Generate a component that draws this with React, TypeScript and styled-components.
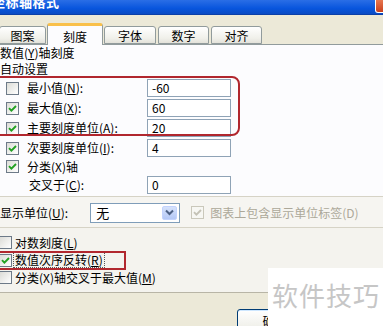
import styled, { createGlobalStyle } from 'styled-components';

const GlobalStyle = createGlobalStyle`
  html, body {
    margin: 0;
    padding: 0;
    background: #ece9d8;
  }
  body {
    font-family: 'Noto Sans CJK SC', 'Liberation Sans', sans-serif;
    font-size: 12px;
    color: #000;
  }
`;

interface CheckProps {
  checked?: boolean;
  disabled?: boolean;
}

const Check = ({ checked, disabled }: CheckProps) => (
  <CheckBox disabled={disabled}>
    {checked && (
      <svg width='9' height='9' viewBox='0 0 9 9'>
        <path d='M1 4.2 L3.4 6.6 L8 2' fill='none' stroke={disabled ? '#c4c2b6' : '#21a121'} strokeWidth='1.9' />
      </svg>
    )}
  </CheckBox>
);

const tabs = [
  { name: '图案', w: 47, gap: 1 },
  { name: '刻度', w: 56, gap: 1, active: true },
  { name: '字体', w: 52, gap: 2 },
  { name: '数字', w: 51, gap: 2 },
  { name: '对齐', w: 51, gap: 0 },
];

const App = () => {
  return (
    <Window>
      <GlobalStyle />
      <TitleBar>
        <Title>坐标轴格式</Title>
        <CloseBtn />
      </TitleBar>

      <TabStrip>
        {tabs.map((t) => (
          <Tab key={t.name} w={t.w} gap={t.gap} active={t.active}>
            {t.name}
          </Tab>
        ))}
      </TabStrip>

      <Group>
        <Heading>
          数值(<u>Y</u>)轴刻度
        </Heading>
        <Heading>自动设置</Heading>
        <Spacer />
        <Row>
          <Check />
          <Label>
            最小值(<u>N</u>):
          </Label>
          <Input>-60</Input>
        </Row>
        <Row>
          <Check checked />
          <Label>
            最大值(<u>X</u>):
          </Label>
          <Input>60</Input>
        </Row>
        <Row>
          <Check checked />
          <Label>
            主要刻度单位(<u>A</u>):
          </Label>
          <Input>20</Input>
        </Row>
        <Row>
          <Check checked />
          <Label>
            次要刻度单位(<u>I</u>):
          </Label>
          <Input>4</Input>
        </Row>
        <Row short>
          <Check checked />
          <Label>分类(X)轴</Label>
        </Row>
        <Row>
          <Label indent>
            交叉于(<u>C</u>):
          </Label>
          <Input>0</Input>
        </Row>
        <RedFrame />
      </Group>

      <UnitRow>
        <span>
          显示单位(<u>U</u>):
        </span>
        <Select>
          <span>无</span>
          <DropBtn>
            <svg width='9' height='7' viewBox='0 0 9 7'>
              <path d='M1 1.5 L4.5 5 L8 1.5' fill='none' stroke='#4d6185' strokeWidth='2' />
            </svg>
          </DropBtn>
        </Select>
        <Check checked disabled />
        <DimLabel>图表上包含显示单位标签(D)</DimLabel>
      </UnitRow>

      <Options>
        <OptRow>
          <Check />
          <OptLabel>
            对数刻度(<u>L</u>)
          </OptLabel>
        </OptRow>
        <OptRow>
          <Check checked />
          <OptLabel focused>
            数值次序反转(<u>R</u>)
          </OptLabel>
        </OptRow>
        <OptRow>
          <Check />
          <OptLabel>
            分类(X)轴交叉于最大值(<u>M</u>)
          </OptLabel>
        </OptRow>
        <RedBox />
      </Options>

      <Footer>
        <Button>确定</Button>
      </Footer>

      <Watermark>软件技巧</Watermark>
    </Window>
  );
};

const Window = styled.div`
  position: relative;
  width: 383px;
  height: 326px;
  overflow: hidden;
  display: flex;
  flex-direction: column;
  background: #ece9d8;
`;

const TitleBar = styled.div`
  height: 14px;
  flex-shrink: 0;
  display: flex;
  align-items: flex-start;
  overflow: hidden;
  background: linear-gradient(#2a6ee6, #0855dd 60%, #0a4bc4);
  border-bottom: 1px solid #0b3fa8;
`;

const Title = styled.div`
  margin: -5px 0 0 -8px;
  font-size: 13px;
  line-height: 13px;
  font-weight: bold;
  color: #fff;
  letter-spacing: 0.5px;
`;

const CloseBtn = styled.div`
  margin-left: auto;
  margin-right: -8px;
  width: 14px;
  height: 12px;
  border: 1px solid #fff;
  border-top: none;
  border-radius: 0 0 0 3px;
  background: linear-gradient(#e8774f, #c9401e);
`;

const TabStrip = styled.div`
  height: 29px;
  flex-shrink: 0;
  display: flex;
  align-items: flex-end;
  margin-left: -1px;
  border-bottom: 1px solid #919b9c;
`;

const Tab = styled.div<{ w: number; gap: number; active?: boolean }>`
  box-sizing: border-box;
  width: ${(p) => p.w}px;
  margin-right: ${(p) => p.gap}px;
  height: ${(p) => (p.active ? 22 : 18)}px;
  margin-bottom: ${(p) => (p.active ? -1 : 0)}px;
  position: relative;
  display: flex;
  align-items: center;
  justify-content: center;
  padding-top: ${(p) => (p.active ? 1 : 0)}px;
  border: 1px solid #919b9c;
  border-bottom: ${(p) => (p.active ? 'none' : '1px solid #919b9c')};
  border-top: ${(p) => (p.active ? '3px solid #f9c04a' : '1px solid #919b9c')};
  border-radius: 3px 3px 0 0;
  background: ${(p) => (p.active ? '#fcfcfe' : 'linear-gradient(#ffffff, #f0f0ea 70%, #e3e2da)')};
  font-size: 12px;
  z-index: ${(p) => (p.active ? 2 : 1)};
`;

const Group = styled.div`
  position: relative;
  height: 151px;
  flex-shrink: 0;
  background: #fcfcfe;
  border-bottom: 1px solid #d6d3c6;
  display: flex;
  flex-direction: column;
`;

const Heading = styled.div`
  height: 16px;
  line-height: 16px;
  padding-left: 0;
  white-space: nowrap;
`;

const Spacer = styled.div`
  height: 1px;
`;

const Row = styled.div<{ short?: boolean }>`
  height: ${(p) => (p.short ? 17 : 20)}px;
  display: flex;
  align-items: center;
  padding-left: 6px;
`;

const CheckBox = styled.div<{ disabled?: boolean }>`
  box-sizing: border-box;
  width: 13px;
  height: 13px;
  flex-shrink: 0;
  display: flex;
  align-items: center;
  justify-content: center;
  border: 1px solid ${(p) => (p.disabled ? '#cac8bb' : '#6d7a88')};
  background: ${(p) => (p.disabled ? '#f7f7f3' : 'linear-gradient(135deg, #dcdcd7, #ffffff)')};
`;

const Label = styled.span<{ indent?: boolean }>`
  width: ${(p) => (p.indent ? 118 : 120)}px;
  margin-left: ${(p) => (p.indent ? 23 : 8)}px;
  white-space: nowrap;
  line-height: 14px;
`;

const Input = styled.div`
  box-sizing: border-box;
  width: 84px;
  height: 18px;
  margin-left: 0;
  padding-left: 4px;
  line-height: 16px;
  border: 1px solid #8fa3b6;
  background: #fff;
`;

const RedFrame = styled.div`
  position: absolute;
  left: -12px;
  top: 31px;
  width: 248px;
  height: 56px;
  border: 2px solid #b1272e;
  border-radius: 8px;
  pointer-events: none;
`;

const UnitRow = styled.div`
  height: 31px;
  flex-shrink: 0;
  display: flex;
  align-items: center;
  background: #f6f5f1;
  border-bottom: 1px solid #d6d3c6;
  white-space: nowrap;
  padding-top: 1px;
  box-sizing: border-box;
`;

const Select = styled.div`
  box-sizing: border-box;
  width: 90px;
  height: 20px;
  margin: 0 11px 0 22px;
  display: flex;
  align-items: center;
  padding: 0 2px 0 5px;
  border: 1px solid #7f9db9;
  background: #fff;
  font-size: 13px;
  & > span {
    flex: 1;
  }
`;

const DropBtn = styled.div`
  width: 15px;
  height: 14px;
  display: flex;
  align-items: center;
  justify-content: center;
  border-radius: 2px;
  background: linear-gradient(#d6e2fb, #b4c8f6);
  border: 1px solid #c3d3fd;
  box-sizing: border-box;
`;

const DimLabel = styled.span`
  margin-left: 6px;
  color: #aca899;
`;

const Options = styled.div`
  position: relative;
  height: 65px;
  flex-shrink: 0;
  box-sizing: border-box;
  padding-top: 6px;
  display: flex;
  flex-direction: column;
  background: #f4f3ee;
  border-bottom: 1px solid #b8b5a6;
`;

const OptRow = styled.div`
  height: 17.5px;
  display: flex;
  align-items: center;
  margin-left: -1px;
`;

const OptLabel = styled.span<{ focused?: boolean }>`
  margin-left: 2px;
  padding: 0 1px;
  line-height: 14px;
  white-space: nowrap;
  outline: ${(p) => (p.focused ? '1px dotted #555' : 'none')};
`;

const RedBox = styled.div`
  position: absolute;
  left: -6px;
  top: 23px;
  width: 128px;
  height: 15px;
  border: 2px solid #b1272e;
  pointer-events: none;
`;

const Footer = styled.div`
  flex: 1;
  display: flex;
  align-items: flex-start;
  padding: 16px 0 0 237px;
  background: #ece9d8;
`;

const Button = styled.div`
  box-sizing: border-box;
  width: 75px;
  height: 23px;
  flex-shrink: 0;
  display: flex;
  align-items: center;
  justify-content: center;
  border: 1px solid #003c74;
  border-radius: 3px;
  background: linear-gradient(#ffffff, #f0f0ea 80%, #d6d0c5);
  box-shadow: inset 0 -1px 0 #c1ccf1, inset 0 1px 0 #cee7ff;
`;

const Watermark = styled.div`
  position: absolute;
  left: 268px;
  top: 268px;
  right: 0;
  bottom: 0;
  background: #fff;
  color: #c6c6c6;
  font-size: 26px;
  line-height: 28px;
  padding: 13px 0 0 4px;
  letter-spacing: 1px;
  white-space: nowrap;
`;

export default App;
